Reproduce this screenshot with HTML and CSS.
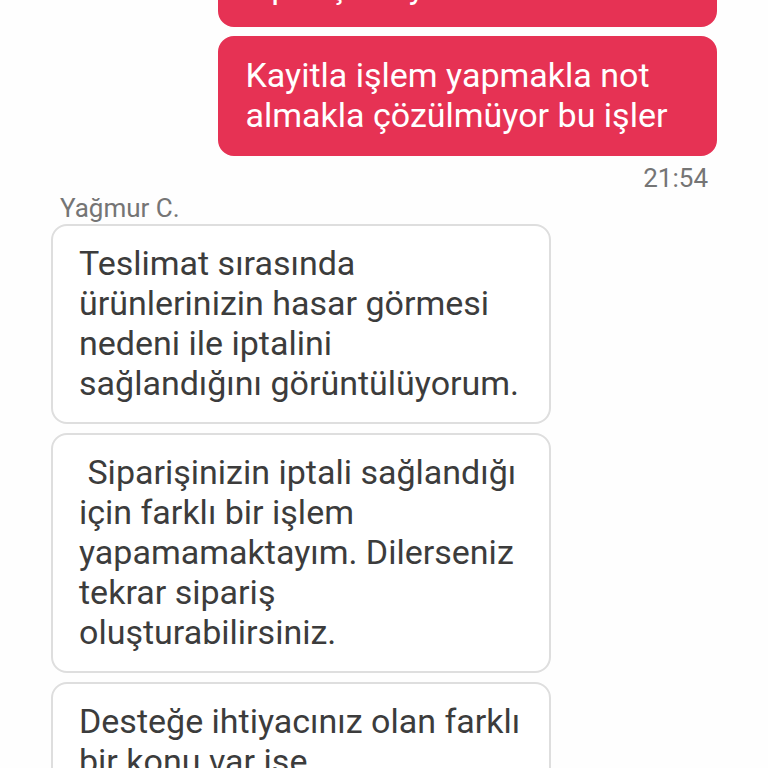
FILE: index.html
```html
<!DOCTYPE html>
<html lang="tr">
<head>
  <meta charset="UTF-8">
  <meta name="viewport" content="width=device-width, initial-scale=1">
  <title>Sohbet</title>
  <link rel="stylesheet" href="styles.css">
</head>
<body>
  <main class="chat">
    <section class="group sent">
      <p class="bubble">sipariş veriyorum</p>
      <p class="bubble">Kayitla işlem yapmakla not almakla çözülmüyor bu işler</p>
      <time class="meta" datetime="21:54">21:54</time>
    </section>

    <section class="group received">
      <div class="meta">Yağmur C.</div>
      <p class="bubble">Teslimat sırasında ürünlerinizin hasar görmesi nedeni ile iptalini sağlandığını görüntülüyorum.</p>
      <p class="bubble">&nbsp;Siparişinizin iptali sağlandığı için farklı bir işlem yapamamaktayım. Dilerseniz tekrar sipariş oluşturabilirsiniz.</p>
      <p class="bubble">Desteğe ihtiyacınız olan farklı bir konu var ise</p>
    </section>
  </main>
</body>
</html>
```

FILE: styles.css
```css
* {
  box-sizing: border-box;
}

body {
  margin: 0;
  background: #fefefe;
  font-family: Roboto, "Noto Sans", sans-serif;
}

.chat {
  height: 100vh;
  padding: 0 51px;
  overflow: hidden;
}

.group {
  display: flex;
  flex-direction: column;
}

/* the list is scrolled, so the first message is cut by the top edge */
.sent {
  align-items: flex-end;
  margin-top: -53px;
}

.received {
  align-items: flex-start;
}

.bubble {
  width: 75%;
  margin: 0;
  padding: 17px 26px 19px;
  border: 2px solid #dedede;
  border-radius: 16px;
  background: #fff;
  color: #3c3c3c;
  font-size: 34px;
  line-height: 40px;
}

.bubble + .bubble {
  margin-top: 9px;
}

.sent .bubble {
  border-color: #e63254;
  background: #e63254;
  color: #fff;
}

.meta {
  padding: 0 9px;
  color: #757575;
  font-size: 26px;
  line-height: 30px;
}

.sent .meta {
  margin-top: 7px;
}

.received .meta {
  margin-bottom: 1px;
}
```
